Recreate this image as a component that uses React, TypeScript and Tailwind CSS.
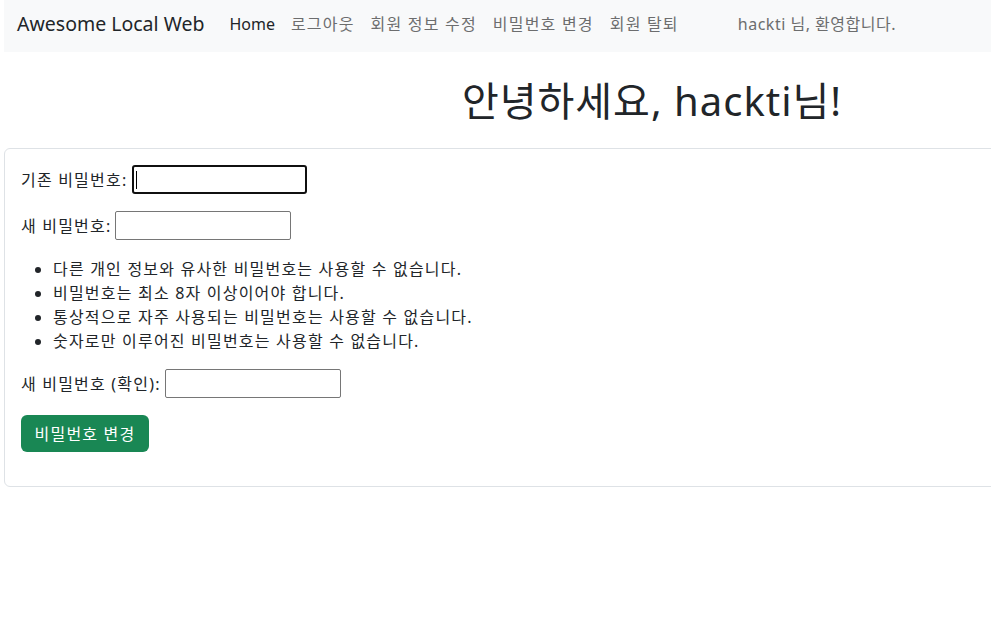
import React from "react";

const font = { fontFamily: '"Noto Sans", "Noto Sans CJK KR", sans-serif' };

export default function App() {
  return (
    <div className="w-full min-h-[629px] overflow-hidden bg-white text-[#212529]" style={font}>
      <div className="ml-1 w-[1296px]">
        <nav className="flex h-[52px] items-center bg-[#f8f9fa] pb-[5px] pl-[13px]">
          <span className="mr-[17px] text-[19.5px] leading-none text-[#212529]">Awesome Local Web</span>
          <ul className="flex items-center text-[16px]">
            <li className="px-2 text-[#212529]">Home</li>
            <li className="px-2 tracking-[1.2px] text-[#6c6d6e]">로그아웃</li>
            <li className="px-2 tracking-[1.2px] text-[#6c6d6e]">회원 정보 수정</li>
            <li className="px-2 tracking-[1.2px] text-[#6c6d6e]">비밀번호 변경</li>
            <li className="px-2 tracking-[1.2px] text-[#6c6d6e]">회원 탈퇴</li>
          </ul>
          <span className="ml-[51px] text-[16px] tracking-[0.5px] text-[#6c6d6e]">hackti 님, 환영합니다.</span>
        </nav>
        <h1 className="mt-[25px] mb-[23px] text-center text-[40px] leading-[48px] font-normal tracking-[1px]">안녕하세요, hackti님!</h1>
        <div className="rounded-md border border-[#dee2e6] p-4 text-[16px] tracking-[1.2px]">
          <div className="flex h-[29px] items-center">
            <label className="mr-[5px]">기존 비밀번호:</label>
            <div className="relative h-[29px] w-[175px] rounded-[3px] border-2 border-[#101010] bg-white">
              <span className="absolute left-[2px] top-[4px] h-[18px] w-px bg-black" />
            </div>
          </div>
          <div className="mt-[17px] flex h-[29px] items-center">
            <label className="mr-[4px]">새 비밀번호:</label>
            <div className="h-[29px] w-[176px] rounded-[2px] border border-[#767676] bg-white" />
          </div>
          <ul className="mt-[17px] list-disc pl-[32px] leading-[24px] marker:text-[#212529]">
            <li>다른 개인 정보와 유사한 비밀번호는 사용할 수 없습니다.</li>
            <li>비밀번호는 최소 8자 이상이어야 합니다.</li>
            <li>통상적으로 자주 사용되는 비밀번호는 사용할 수 없습니다.</li>
            <li>숫자로만 이루어진 비밀번호는 사용할 수 없습니다.</li>
          </ul>
          <div className="mt-[16px] flex h-[29px] items-center">
            <label className="mr-[4px]">새 비밀번호 (확인):</label>
            <div className="h-[29px] w-[176px] rounded-[2px] border border-[#767676] bg-white" />
          </div>
          <button className="mt-[17px] h-[37px] w-[128px] rounded-md bg-[#198754] text-[16px] text-white">
            비밀번호 변경
          </button>
          <div className="h-[18px]" />
        </div>
      </div>
    </div>
  );
}
